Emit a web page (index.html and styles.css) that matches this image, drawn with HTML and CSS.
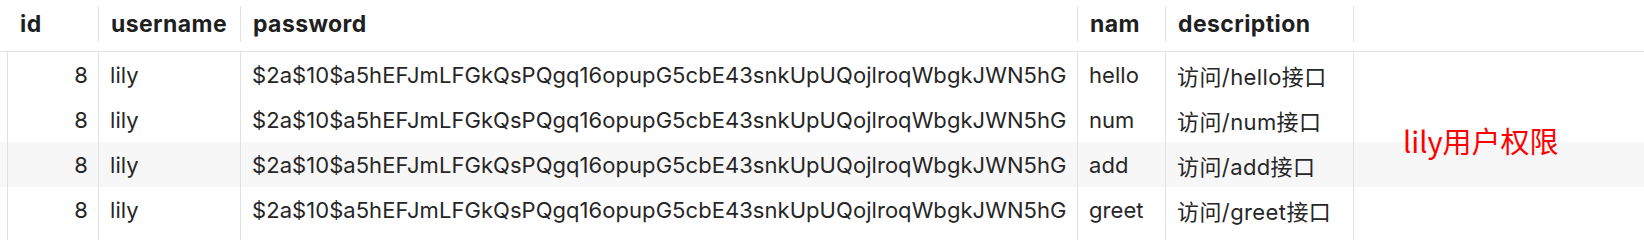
FILE: index.html
```html
<!DOCTYPE html>
<html lang="zh-CN">
<head>
    <meta charset="UTF-8">
    <meta name="viewport" content="width=device-width, initial-scale=1.0">
    <title>user permissions</title>
    <link rel="stylesheet" href="styles.css">
</head>
<body>
    <div class="table">
        <div class="row head">
            <div class="gutter"></div>
            <div class="th"><span>id</span></div>
            <div class="th"><span>username</span></div>
            <div class="th"><span>password</span></div>
            <div class="th"><span>nam</span></div>
            <div class="th"><span>description</span></div>
            <div class="th last"></div>
        </div>

        <div class="row">
            <div class="gutter"></div>
            <div class="td num">8</div>
            <div class="td">lily</div>
            <div class="td">$2a$10$a5hEFJmLFGkQsPQgq16opupG5cbE43snkUpUQojlroqWbgkJWN5hG</div>
            <div class="td">hello</div>
            <div class="td desc">访问/hello接口</div>
            <div class="td last"></div>
        </div>
        <div class="row">
            <div class="gutter"></div>
            <div class="td num">8</div>
            <div class="td">lily</div>
            <div class="td">$2a$10$a5hEFJmLFGkQsPQgq16opupG5cbE43snkUpUQojlroqWbgkJWN5hG</div>
            <div class="td">num</div>
            <div class="td desc">访问/num接口</div>
            <div class="td last"></div>
        </div>
        <div class="row hover">
            <div class="gutter"></div>
            <div class="td num">8</div>
            <div class="td">lily</div>
            <div class="td">$2a$10$a5hEFJmLFGkQsPQgq16opupG5cbE43snkUpUQojlroqWbgkJWN5hG</div>
            <div class="td">add</div>
            <div class="td desc">访问/add接口</div>
            <div class="td last"></div>
        </div>
        <div class="row">
            <div class="gutter"></div>
            <div class="td num">8</div>
            <div class="td">lily</div>
            <div class="td">$2a$10$a5hEFJmLFGkQsPQgq16opupG5cbE43snkUpUQojlroqWbgkJWN5hG</div>
            <div class="td">greet</div>
            <div class="td desc">访问/greet接口</div>
            <div class="td last"></div>
        </div>
        <div class="row filler">
            <div class="gutter"></div>
            <div class="td"></div>
            <div class="td"></div>
            <div class="td"></div>
            <div class="td"></div>
            <div class="td"></div>
            <div class="td last"></div>
        </div>
    </div>

    <!-- note written over the grid -->
    <div class="note">lily用户权限</div>
</body>
</html>
```

FILE: styles.css
```css
:root {
    --line: #e2e2e2;
    --text: #262626;
    --hover: #f7f7f7;
    --note: #ff0000;
}

* {
    box-sizing: border-box;
}

body {
    margin: 0;
    height: 240px;
    overflow: hidden;
    background: #fff;
    font-family: 'Inter', 'Noto Sans CJK SC', sans-serif;
    font-size: 22px;
    letter-spacing: 0.05px;
    color: var(--text);
    position: relative;
}

.table {
    display: flex;
    flex-direction: column;
    height: 100%;
}

.row {
    display: grid;
    grid-template-columns: 8px 91px 142px 837px 88px 188px 1fr;
    height: 45px;
}

.row.head {
    height: 52px;
    border-bottom: 1px solid var(--line);
}

.row.hover {
    background: var(--hover);
}

.row.filler {
    flex: 1;
}

.gutter {
    border-right: 1px solid var(--line);
}

.head .gutter {
    border-right: none;
}

.th {
    padding-top: 6px;
}

.th span {
    display: flex;
    align-items: center;
    height: 36px;
    padding-left: 12px;
    border-right: 1px solid var(--line);
    font-size: 23px;
    font-weight: 700;
    letter-spacing: 0.4px;
    color: #1f1f1f;
}

.td {
    display: flex;
    align-items: center;
    padding: 0 11px;
    border-right: 1px solid var(--line);
    white-space: nowrap;
    overflow: hidden;
}

.td.num {
    justify-content: flex-end;
    padding-right: 10px;
}

.td.desc {
    letter-spacing: 0.4px;
}

.td.last {
    border-right: none;
}

.note {
    position: absolute;
    left: 1403px;
    top: 124px;
    font-size: 29px;
    line-height: 32px;
    letter-spacing: 0;
    color: var(--note);
    font-family: 'Noto Sans CJK SC', sans-serif;
}
```
